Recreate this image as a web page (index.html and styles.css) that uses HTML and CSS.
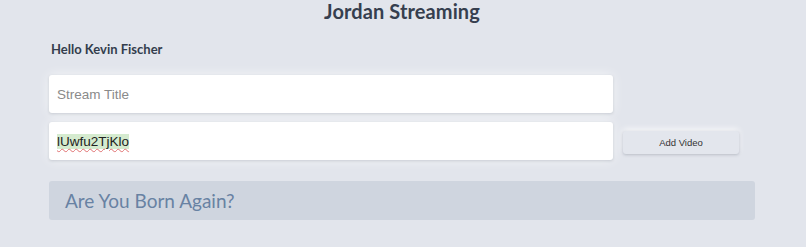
FILE: index.html
```html
<!DOCTYPE html>
<html lang="en">
<head>
    <meta charset="UTF-8">
    <meta name="viewport" content="width=device-width, initial-scale=1.0">
    <title>Jordan Streaming</title>
    <link rel="stylesheet" href="styles.css">
</head>
<body>
    <div class="app">
        <h1 class="app-title">Jordan Streaming</h1>

        <div class="greeting">Hello Kevin Fischer</div>

        <div class="video-form">
            <input class="field" type="text" placeholder="Stream Title">
            <div class="field field-filled"><span class="typed">lUwfu2TjKlo</span></div>
            <button class="add-btn">Add Video</button>
        </div>

        <div class="stream-list">
            <div class="stream-item">Are You Born Again?</div>
        </div>
    </div>
</body>
</html>
```

FILE: styles.css
```css
* {
    margin: 0;
    padding: 0;
    box-sizing: border-box;
}

body {
    background: #e2e5ec;
    font-family: Lato, 'Noto Sans', sans-serif;
    color: #333d4d;
}

.app {
    padding: 0 51px 0 49px;
}

.app-title {
    text-align: center;
    font-size: 20px;
    font-weight: 700;
    line-height: 22px;
    color: #363f4f;
    letter-spacing: 0.1px;
}

.greeting {
    margin-top: 18px;
    padding-left: 2px;
    font-size: 13px;
    font-weight: 700;
    line-height: 18px;
    color: #333d4d;
}

.video-form {
    display: grid;
    grid-template-columns: 564px 116px;
    column-gap: 10px;
    row-gap: 9px;
    margin-top: 17px;
}

.field {
    grid-column: 1;
    height: 38px;
    border: none;
    border-radius: 3px;
    background: #fff;
    box-shadow: 0 1px 3px rgba(40, 50, 70, 0.18), 0 0 12px rgba(255, 255, 255, 0.7);
    padding: 0 8px;
    font-family: 'Liberation Sans', Arial, sans-serif;
    font-size: 13.5px;
    color: #222;
    outline: none;
}

.field::placeholder {
    color: #8a8a8a;
}

.field-filled {
    display: flex;
    align-items: center;
}

.typed {
    background: #d5ebcf;
    text-decoration: underline wavy #e07070;
    text-decoration-thickness: 1px;
    text-underline-offset: 2px;
    line-height: 15px;
}

.add-btn {
    grid-column: 2;
    grid-row: 2;
    align-self: center;
    margin-top: 3px;
    height: 23px;
    border: none;
    border-radius: 3px;
    background: #e3e6ed;
    box-shadow: 0 1px 3px rgba(40, 50, 70, 0.25), 0 -2px 6px rgba(255, 255, 255, 0.8);
    font-family: 'Liberation Sans', Arial, sans-serif;
    font-size: 9.5px;
    color: #333;
    cursor: pointer;
}

.stream-list {
    margin-top: 21px;
    width: 706px;
}

.stream-item {
    height: 39px;
    border-radius: 3px;
    background: #cfd5df;
    padding-left: 16px;
    display: flex;
    align-items: center;
    font-size: 19px;
    font-weight: 400;
    color: #6882a3;
}
```
